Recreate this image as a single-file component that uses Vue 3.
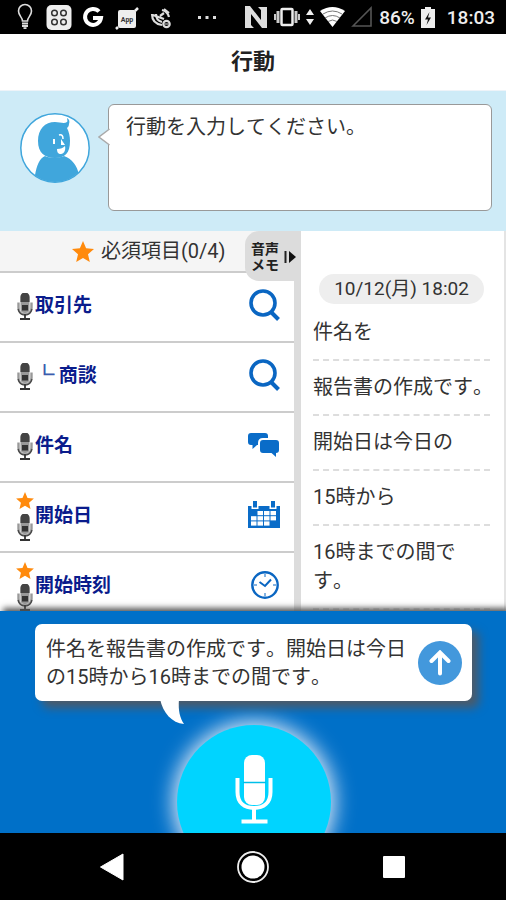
<script setup>
import { ref } from 'vue'

const action = ref('')
const fields = [
  { id: 'client', label: '取引先', icon: 'search', required: false },
  { id: 'deal', branch: '└', label: ' 商談', icon: 'search', required: false },
  { id: 'subject', label: '件名', icon: 'chat', required: false },
  { id: 'date', label: '開始日', icon: 'calendar', required: true },
  { id: 'time', label: '開始時刻', icon: 'clock', required: true }
]
const memos = ['件名を', '報告書の作成です。', '開始日は今日の', '15時から', '16時までの間です。']
const calendarCells = [
  [1, 0], [2, 0], [3, 0],
  [0, 1], [1, 1], [2, 1], [3, 1],
  [0, 2], [1, 2], [2, 2]
]
const starPath = 'M11 0l3.1 7.3 7.9.7-6 5.2 1.8 7.8-6.8-4.1L4.200 21 6 13.200 0 8l7.900-.7z'
</script>

<template>
  <div class="screen">
    <header class="status">
      <div class="notices">
        <svg class="notice" width="34" height="30" viewBox="0 0 34 30" fill="none" stroke="#ddd" stroke-width="1.600">
          <path d="M14.500 19c0-4-4-5-4-10a6.500 6.500 0 0 1 13 0c0 5-4 6-4 10z" />
          <path d="M14 21.500h6M14 24h6M15.500 26.200h3" stroke-width="1.800" />
        </svg>
        <svg class="notice" width="34" height="30" viewBox="0 0 34 30">
          <rect x="4.500" y="3" width="25" height="25" rx="5" fill="#eee" />
          <g fill="none" stroke="#333" stroke-width="1.500">
            <circle cx="12.500" cy="11" r="2.800" /><circle cx="21.500" cy="11" r="2.800" />
            <circle cx="12.500" cy="20" r="2.800" /><circle cx="21.500" cy="20" r="2.800" />
          </g>
        </svg>
        <svg class="notice" width="34" height="30" viewBox="0 0 34 30" fill="none" stroke="#fff" stroke-width="4">
          <path d="M23 9.500A8 8 0 1 0 25 16h-8" />
        </svg>
        <svg class="notice" width="34" height="30" viewBox="0 0 34 30">
          <rect x="8" y="8" width="18" height="18" rx="2" fill="#eee" />
          <path d="M25 9l3-3M6 27l2-2" stroke="#eee" stroke-width="2.500" />
          <text x="17" y="20" class="app-text" text-anchor="middle">App</text>
        </svg>
        <svg class="notice" width="34" height="30" viewBox="0 0 34 30" fill="none" stroke="#ddd" stroke-width="2.200">
          <path d="M8 12c0 6 3 10 10 11M12 12c0 4 2 7 6 8M9 13l11 4M16 14l4-3" />
          <path d="M18 8c4 1 6 3 7 7M20 7l5 4" />
          <circle cx="22.500" cy="22" r="3.200" /><path d="M20.500 22h4" stroke-width="1" />
        </svg>
        <svg class="more" width="20" height="30" viewBox="0 0 20 30" fill="#ddd">
          <path d="M1 14h3v3H1zM8.500 14h3v3h-3zM16 14h3v3h-3z" />
        </svg>
      </div>
      <div class="signals">
        <svg width="24" height="24" viewBox="0 0 24 24" fill="#ddd">
          <path d="M1 1h5l11 14V5l-3-3h9v21h-5L7 9v11l3 3H1z" />
        </svg>
        <svg width="26" height="24" viewBox="0 0 26 24">
          <rect x="7.500" y="4" width="11" height="16" rx="1" fill="none" stroke="#eee" stroke-width="2.500" />
          <path d="M4 6v12M22 6v12" stroke="#ccc" stroke-width="3" /><path d="M1 9v6M25 9v6" stroke="#ccc" stroke-width="2" />
        </svg>
        <svg width="8" height="24" viewBox="0 0 8 24" fill="#eee"><path d="M4 4l4 6H0zM4 20l4-6H0z" /></svg>
        <svg width="25" height="24" viewBox="0 0 25 24">
          <path d="M0 6q12.500-8 25 0L12.500 22z" fill="#fff" />
          <path d="M3 9q9.500-6 19 0M5 13q7.500-5 15 0M8 16.500q4.500-3 9 0" fill="none" stroke="#777" stroke-width="1" />
        </svg>
        <svg width="22" height="24" viewBox="0 0 22 24"><path d="M2 21L20 3v18z" fill="none" stroke="#555" stroke-width="1.600" /></svg>
        <span class="percent">86%</span>
        <svg width="14" height="24" viewBox="0 0 14 24">
          <path d="M4 2h6v2h4v19H0V4h4z" fill="#eee" /><path d="M8.500 7L4 14.500h3L5.500 20l4.500-7.500H7z" fill="#111" />
        </svg>
        <time>18:03</time>
      </div>
    </header>

    <h1 class="title">行動</h1>

    <section class="prompt">
      <svg class="avatar" width="70" height="70" viewBox="0 0 70 70">
        <defs><clipPath id="face"><circle cx="35" cy="35" r="34" /></clipPath></defs>
        <circle cx="35" cy="35" r="34" fill="#fff" />
        <g clip-path="url(#face)" fill="#40a6dc">
          <path d="M18 28c0-12 7-19 17-19 5 0 9 2 12 0 1-1 0-2 0-4 2 1 3 3 2 6 0 2-1 3-2 4 2 4 3 8 3 13 0 12-5 17-15 17S18 40 18 28z" />
          <path d="M25 43c3 2 15 2 19 0 8 3 13 9 15 19v9H13l2-9c2-10 4-16 10-19z" />
        </g>
        <path d="M34 26v5" stroke="#fff" stroke-width="2" /><path d="M39 22c3-1 4 1 4 4" fill="none" stroke="#fff" stroke-width="1.500" />
        <path d="M41 26l4 6h-4zM37 36c4 0 6-1 8-3 1 4-1 8-4 8s-4-2-4-5z" fill="#fff" />
        <circle cx="35" cy="35" r="34.200" fill="none" stroke="#40a6dc" stroke-width="1.500" />
      </svg>
      <div class="speech">
        <textarea v-model="action" aria-label="行動" placeholder="行動を入力してください。"></textarea>
        <svg class="pointer" width="12" height="18" viewBox="0 0 12 18"><path d="M11.500 1L1 9l10.500 8" fill="#fff" stroke="#aaa" stroke-width="1.500" /></svg>
      </div>
    </section>

    <main class="content">
      <section class="form">
        <div class="required">
          <svg width="22" height="21" viewBox="0 0 22 21" fill="#ff8a0c"><path :d="starPath" /></svg>
          <span>必須項目(0/4)</span>
        </div>
        <button class="memo-tab" type="button">
          <span>音声<br />メモ</span>
          <svg width="12" height="14" viewBox="0 0 12 14"><path d="M1.500 1v12" stroke="#222" stroke-width="2" /><path d="M5 1l7 6-7 6z" fill="#111" /></svg>
        </button>
        <ul class="fields">
          <li v-for="f in fields" :key="f.id">
            <button class="field" type="button">
              <span class="marks">
                <svg v-if="f.required" width="18" height="17" viewBox="0 0 22 21" fill="#ff8a0c"><path :d="starPath" /></svg>
                <svg width="16" height="27" viewBox="0 0 16 27">
                  <rect x="3.500" y="0" width="9" height="20" rx="4" fill="#999" />
                  <path d="M3.500 9V4a4.500 4.500 0 0 1 9 0v5z" fill="#444" />
                  <path d="M1.500 9.500V15c0 4 3 6.500 6.500 6.500s6.500-2.500 6.500-6.500V9.500" fill="none" stroke="#999" stroke-width="2.400" />
                  <path d="M1 16c1 4 3 6 7 6s6-2 7-6" fill="none" stroke="#444" stroke-width="1.200" />
                  <rect x="5" y="12" width="6" height="5.500" fill="#333" />
                  <path d="M8 21v4.500M3 26h10" stroke="#333" stroke-width="1.800" />
                </svg>
              </span>
              <span class="label"><span v-if="f.branch" class="branch">{{ f.branch }}</span>{{ f.label }}</span>
              <svg v-if="f.icon === 'search'" width="32" height="34" viewBox="0 0 32 34" fill="none" stroke="#0a66c2">
                <circle cx="15" cy="15" r="12" stroke-width="3.600" /><path d="M23 24l7.500 7.500" stroke-width="4" />
              </svg>
              <svg v-else-if="f.icon === 'chat'" width="32" height="24" viewBox="0 0 32 24" fill="#0a6cc8">
                <path d="M3 0h14q3 0 3 3v2h-5q-5 0-5 5v2H9l-4.500 4V12H3q-3 0-3-3V3q0-3 3-3z" />
                <path d="M15 7h13q3 0 3 3v7q0 3-3 3v4l-4.500-4H15q-3 0-3-3v-7q0-3 3-3z" />
              </svg>
              <svg v-else-if="f.icon === 'calendar'" width="32" height="28" viewBox="0 0 32 28">
                <path d="M0 5h3.500v3h7V5h11v3h7V5H32v22H0z" fill="#0a6cc8" /><path d="M5 0h4v6.500H5zM23 0h4v6.500h-4z" fill="#0a6cc8" />
                <rect v-for="([c, r], i) in calendarCells" :key="i" :x="3 + c * 6.500" :y="10 + r * 5.200" width="5.500" height="4.200" fill="#fff" />
              </svg>
              <svg v-else width="30" height="30" viewBox="0 0 30 30" fill="none" stroke="#0a66c2">
                <circle cx="15" cy="15" r="12.700" stroke-width="2.400" />
                <path d="M9.500 12l5.500 4 6-6.500" stroke-width="2" />
                <path d="M15 4v3M15 23v3M4 15h3M23 15h3" stroke-width="1" />
              </svg>
            </button>
          </li>
        </ul>
      </section>
      <section class="history">
        <time class="stamp">10/12(月) 18:02</time>
        <p v-for="(m, i) in memos" :key="i" class="memo"><span>{{ m }}</span></p>
      </section>
    </main>

    <section class="dock">
      <div class="bubble">
        <p>件名を報告書の作成です。開始日は今日の15時から16時までの間です。</p>
        <button class="send" type="button" aria-label="送信">
          <svg width="22" height="26" viewBox="0 0 22 26" fill="none" stroke="#fff" stroke-width="4" stroke-linecap="round">
            <path d="M11 23.500V3M2.500 11L11 2.500l8.500 8.500" />
          </svg>
        </button>
        <svg class="tail" width="26" height="26" viewBox="0 0 26 26"><path d="M0 0h19c-1 12 1 19 5 25C12 24 3 14 0 0z" fill="#fff" /></svg>
      </div>
      <button class="record" type="button" aria-label="音声入力">
        <svg width="38" height="70" viewBox="0 0 38 70">
          <rect x="9" y="1" width="21" height="50" rx="8" fill="#fff" />
          <path d="M8 28.500h23" stroke="#00bfe8" stroke-width="1.500" />
          <path d="M2.500 24v14c0 11 7 16 16.500 16s16.500-5 16.500-16V24" fill="none" stroke="#fff" stroke-width="4" />
          <path d="M19 54v13M6.500 67.500h26" stroke="#fff" stroke-width="4" />
        </svg>
      </button>
    </section>

    <nav class="system">
      <button type="button" aria-label="戻る"><svg width="26" height="30" viewBox="0 0 26 30"><path d="M1.500 15L24 2v26z" fill="#fff" stroke="#fff" stroke-linejoin="round" /></svg></button>
      <button type="button" aria-label="ホーム"><svg width="34" height="34" viewBox="0 0 34 34"><circle cx="17" cy="17" r="15" fill="none" stroke="#eee" stroke-width="1.800" /><circle cx="17" cy="17" r="11.500" fill="#fff" /></svg></button>
      <button type="button" aria-label="履歴"><svg width="22" height="22" viewBox="0 0 22 22"><rect width="22" height="22" rx="1" fill="#fff" /></svg></button>
    </nav>
  </div>
</template>

<style>
body { margin: 0; }
</style>

<style scoped>
.screen {
  display: flex;
  flex-direction: column;
  height: 100vh;
  overflow: hidden;
  background: #fff;
  color: #333;
  font-family: Roboto, "Noto Sans CJK JP", sans-serif;
  font-size: 20px;
  font-kerning: none;
  text-spacing-trim: space-all;
}
svg { display: block; flex: none; }
button {
  margin: 0;
  padding: 0;
  border: 0;
  background: none;
  color: inherit;
  font: inherit;
  font-kerning: none;
}
.status {
  flex: none;
  display: flex;
  justify-content: space-between;
  align-items: center;
  height: 34px;
  padding: 0 11px 0 8px;
  background: #000;
  color: #eee;
}
.notices, .signals { display: flex; align-items: center; }
.signals { gap: 6px; font-size: 19px; font-weight: 500; }
.signals time { margin-left: 6px; }
.more { margin-left: 19px; }
.app-text { font-size: 7px; font-weight: 700; fill: #333; }
.title {
  flex: none;
  margin: 0;
  height: 56px;
  line-height: 56px;
  border-bottom: 1px solid #eef3f8;
  text-align: center;
  font-size: 22px;
  font-weight: 700;
  color: #222;
}
.prompt {
  flex: none;
  display: flex;
  align-items: flex-start;
  gap: 18px;
  height: 140px;
  box-sizing: border-box;
  padding: 13px 14px 20px 20px;
  background: #ceebf7;
}
.avatar { margin-top: 9px; }
.speech { position: relative; flex: 1; align-self: stretch; display: flex; }
.speech textarea {
  flex: 1;
  min-width: 0;
  box-sizing: border-box;
  margin: 0;
  padding: 7px 17px;
  border: 1px solid #999;
  border-radius: 6px;
  outline: 0;
  resize: none;
  background: #fff;
  color: #333;
  font: inherit;
  line-height: 30px;
}
.speech textarea::placeholder { color: #333; opacity: 1; }
.pointer { position: absolute; left: -10px; top: 24px; }
.content {
  flex: 1;
  min-height: 0;
  display: grid;
  grid-template-columns: 301fr 205fr;
  overflow: hidden;
}
.form {
  position: relative;
  min-width: 0;
  border-right: 7px solid #dcdcdc;
}
.required {
  display: flex;
  align-items: center;
  gap: 7px;
  height: 40px;
  padding-left: 72px;
  border-bottom: 2px solid #ccc;
  background: #f5f5f5;
  line-height: 20px;
}
.memo-tab {
  position: absolute;
  top: 0;
  right: -7px;
  display: flex;
  align-items: center;
  gap: 5px;
  height: 50px;
  padding: 2px 5px 0 6px;
  border-radius: 14px 0 0 14px;
  background: #dcdcdc;
  color: #222;
  font-size: 14px;
  font-weight: 700;
  line-height: 16px;
}
.fields { margin: 0; padding: 0; list-style: none; }
.field {
  display: flex;
  align-items: center;
  width: 100%;
  height: 70px;
  box-sizing: border-box;
  padding: 0 14px 4px 16px;
  border-bottom: 2px solid #ccc;
  text-align: left;
}
.marks {
  flex: none;
  display: flex;
  flex-direction: column;
  align-items: center;
  gap: 5px;
  width: 18px;
  padding-top: 3px;
}
.label {
  flex: 1;
  padding: 0 0 4px 1px;
  color: #0a1c8c;
  font-size: 19px;
  font-weight: 700;
  white-space: pre;
}
.branch { color: #3c5cae; -webkit-text-stroke: 1px #3c5cae; }
.history {
  min-width: 0;
  padding: 43px 14px 0 12px;
  border-right: 2px solid #e4e4e4;
}
.stamp {
  display: block;
  width: fit-content;
  margin: 0 auto 14px;
  padding: 0 15px;
  border-radius: 15px;
  background: #eee;
  font-size: 19px;
  line-height: 30px;
}
.memo {
  margin: 0 0 12px;
  padding-bottom: 12px;
  border-bottom: 2px dashed #ddd;
  line-height: 29px;
}
.memo span { display: block; margin-right: -4px; }
.dock {
  position: relative;
  flex: none;
  display: flex;
  flex-direction: column;
  align-items: center;
  gap: 24px;
  height: 222px;
  box-sizing: border-box;
  padding: 13px 34px 0 35px;
  overflow: hidden;
  background: #0070c8;
  box-shadow: 3px -3px 6px #555;
}
.bubble {
  position: relative;
  z-index: 1;
  display: flex;
  align-items: center;
  gap: 6px;
  width: 100%;
  box-sizing: border-box;
  padding: 11px 10px 10px 11px;
  border-radius: 7px;
  background: #fff;
  box-shadow: 7px 7px 10px #4c5a68;
}
.bubble p { flex: 1; margin: 0; line-height: 28px; }
.send {
  display: grid;
  place-items: center;
  width: 44px;
  height: 44px;
  border-radius: 50%;
  background: #4398dc;
}
.tail { position: absolute; left: 125px; top: 75px; }
.record {
  flex: none;
  display: grid;
  place-items: center;
  width: 154px;
  height: 154px;
  padding-bottom: 26px;
  box-sizing: border-box;
  border-radius: 50%;
  background: #00d4ff;
  box-shadow: 0 0 20px 4px #d6e6f6;
}
.system {
  position: relative;
  flex: none;
  display: grid;
  grid-template-columns: repeat(3, 1fr);
  height: 67px;
  padding: 0 42px;
  background: #000;
}
.system button { display: grid; place-items: center; }
</style>
